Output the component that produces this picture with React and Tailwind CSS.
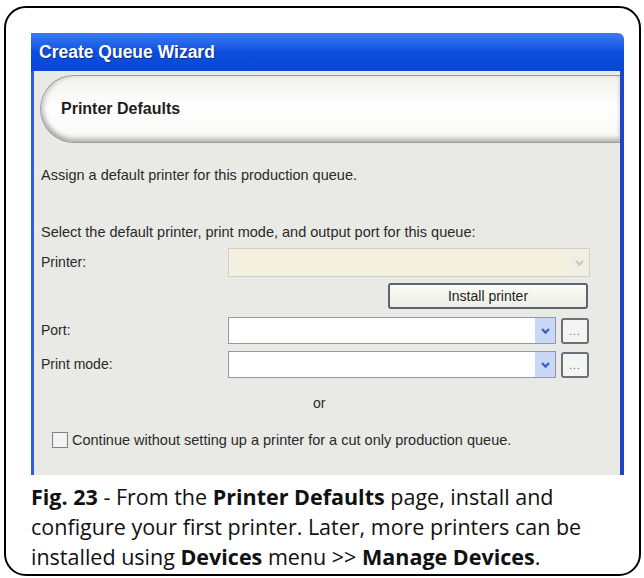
import React from "react";

const uiFont = { fontFamily: '"Liberation Sans", Arial, sans-serif' };
const captionFont = { fontFamily: '"Open Sans", "Noto Sans", sans-serif' };

// small blue "v" used on the combo boxes
const Chevron = ({ faded }) => (
  <svg width="11" height="8" viewBox="0 0 11 8">
    <polyline
      points="2,2 5.5,5.5 9,2"
      fill="none"
      stroke={faded ? "#c9c9c2" : "#3b5fcf"}
      strokeWidth="2.4"
    />
  </svg>
);

const ComboBox = ({ disabled, className = "" }) => (
  <div
    className={`flex h-full items-stretch border ${
      disabled
        ? "border-[#d2d0c6] bg-[#f3f0df]"
        : "border-[#8f9aa6] bg-white"
    } ${className}`}
  >
    <div className="flex-1" />
    <div
      className={`flex w-[20px] items-center justify-center ${
        disabled ? "bg-[#f1efe4]" : "bg-[#c9d8f6]"
      }`}
    >
      <Chevron faded={disabled} />
    </div>
  </div>
);

const DotsButton = () => (
  <div className="flex h-[26px] w-[28px] items-center justify-center rounded-[3px] border-2 border-[#6a717b] bg-[#f4f5f1]">
    <span className="mt-[3px] text-[10px] leading-none tracking-[1px] text-[#55606e]">
      ...
    </span>
  </div>
);

const Row = ({ label, children, className = "" }) => (
  <div className={`flex items-center ${className}`}>
    <div className="w-[187px] text-[14px] text-[#2a2a2a]">{label}</div>
    {children}
  </div>
);

export default function App() {
  return (
    <div className="h-[578px] w-[644px] bg-white pl-[4px] pt-[6px]">
      <div className="h-[570px] w-[637px] rounded-[22px] border-2 border-black pl-[25px] pt-[25px]">
        {/* wizard window */}
        <div className="w-[593px]" style={uiFont}>
          <div className="flex h-[38px] items-center rounded-tr-[6px] bg-gradient-to-b from-[#3d7cf0] via-[#0b4fe0] to-[#0a47d2] pl-[8px]">
            <span className="text-[17.5px] font-bold text-white [text-shadow:1px_1px_0_#0a2c8a]">
              Create Queue Wizard
            </span>
          </div>

          <div className="h-[404px] border-l-[3px] border-r-[4px] border-l-[#2b5fe0] border-r-[#1d46c8] bg-[#e9e9e6]">
            {/* page header band */}
            <div className="pl-[6px] pt-[4px]">
              <div className="flex h-[68px] items-center rounded-l-[34px] border border-r-0 border-[#9c9c98] bg-gradient-to-b from-[#f2f2f0] via-white to-[#f6f6f4] pl-[20px] shadow-[inset_0_-4px_4px_rgba(0,0,0,0.22),inset_4px_0_4px_rgba(0,0,0,0.12)]">
                <span className="text-[16px] font-bold text-[#1e1e1e]">
                  Printer Defaults
                </span>
              </div>
            </div>

            <div className="pl-[7px] pr-[30px]">
              <p className="mt-[23px] text-[14.5px] leading-[18px] text-[#2a2a2a]">
                Assign a default printer for this production queue.
              </p>
              <p className="mt-[39px] text-[14.5px] leading-[18px] text-[#2a2a2a]">
                Select the default printer, print mode, and output port for this queue:
              </p>

              <Row label="Printer:" className="mt-[7px] h-[29px]">
                <ComboBox disabled className="w-[363px]" />
              </Row>

              <div className="mt-[6px] flex justify-end">
                <div className="mr-[2px] flex h-[26px] w-[200px] items-center justify-center rounded-[3px] border-2 border-[#5d646e] bg-gradient-to-b from-[#fbfbf8] to-[#eeeee4] text-[14px] text-[#1e1e1e]">
                  Install printer
                </div>
              </div>

              <Row label="Port:" className="mt-[8px] h-[27px]">
                <ComboBox className="w-[328px]" />
                <div className="ml-[5px]">
                  <DotsButton />
                </div>
              </Row>

              <Row label="Print mode:" className="mt-[7px] h-[27px]">
                <ComboBox className="w-[328px]" />
                <div className="ml-[5px]">
                  <DotsButton />
                </div>
              </Row>

              <p className="mt-[16px] pl-[272px] text-[14px] leading-[18px] text-[#2a2a2a]">
                or
              </p>

              <label className="mt-[19px] flex items-center pl-[11px] text-[14.5px] leading-[18px] text-[#2a2a2a]">
                <span className="mr-[4px] h-[16px] w-[16px] border border-[#7e8288] bg-[#f4f4f2]" />
                Continue without setting up a printer for a cut only production queue.
              </label>
            </div>
          </div>
        </div>

        {/* figure caption */}
        <div className="mt-[7px] text-[21.5px] leading-[30px] text-[#111]" style={captionFont}>
          <div>
            <b>Fig. 23</b> - From the <b>Printer Defaults</b> page, install and
          </div>
          <div>configure your first printer. Later, more printers can be</div>
          <div>
            installed using <b>Devices</b> menu &gt;&gt; <b>Manage Devices</b>.
          </div>
        </div>
      </div>
    </div>
  );
}
